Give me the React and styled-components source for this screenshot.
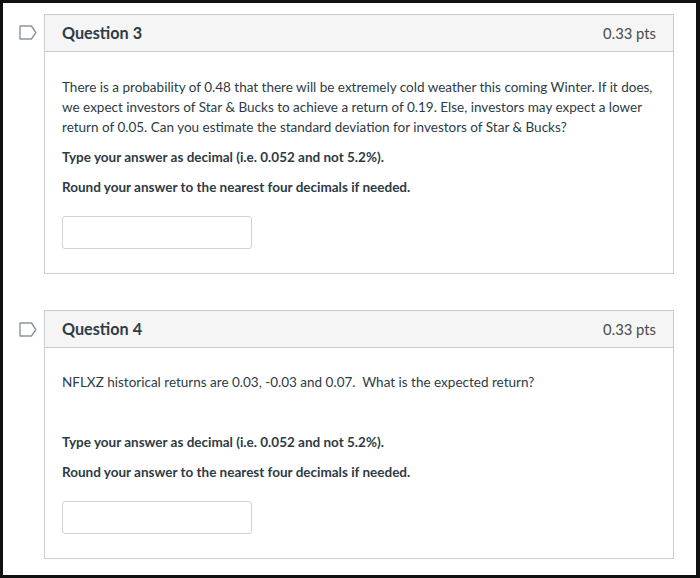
import React from "react";
import styled, { createGlobalStyle } from "styled-components";

const GlobalStyle = createGlobalStyle`
  html, body {
    margin: 0;
    padding: 0;
    background: #fff;
  }
  * {
    box-sizing: border-box;
  }
`;

const Frame = styled.div`
  width: 700px;
  height: 578px;
  border: 3px solid #111;
  border-right-width: 4px;
  background: #fff;
  padding: 11px 22px 0 16px;
  display: flex;
  flex-direction: column;
  gap: 36px;
  font-family: Lato, "Open Sans", sans-serif;
  color: #2d3b45;
  overflow: hidden;
`;

const QuestionRow = styled.div`
  display: flex;
  align-items: flex-start;
`;

const FlagCol = styled.div`
  width: 25px;
  flex: none;
  padding-top: ${(p) => p.$top || 10}px;
`;

const Card = styled.div`
  flex: 1;
  border: 1px solid #c7cdd1;
  background: #fff;
`;

const Header = styled.div`
  display: flex;
  justify-content: space-between;
  align-items: center;
  height: 37px;
  padding: 0 17px 1px;
  background: #f5f5f5;
  border-bottom: 1px solid #c7cdd1;
`;

const Title = styled.div`
  font-size: 16.2px;
  font-weight: 700;
  color: #2d3b45;
`;

const Points = styled.div`
  font-size: 14.8px;
  font-weight: 400;
  color: #4a4a4a;
`;

const Body = styled.div`
  padding: ${(p) => p.$top}px 17px 24px;
`;

const Text = styled.p`
  margin: 0 0 10px;
  font-size: 13.5px;
  line-height: 20px;
  font-weight: ${(p) => (p.$bold ? 700 : 400)};
`;

const Spacer = styled.div`
  height: ${(p) => p.$h}px;
`;

const AnswerBox = styled.input`
  display: block;
  margin-top: 19px;
  width: 190px;
  height: 33px;
  border: 1px solid #cfd3d6;
  border-radius: 3px;
  background: #fff;
  outline: none;
`;

const Flag = () => (
  <svg width="18" height="15" viewBox="0 0 18 15">
    <path
      d="M1 1 H12.5 L16.8 7.5 L12.5 14 H1 Z"
      fill="none"
      stroke="#8b969e"
      strokeWidth="1.4"
      strokeLinejoin="round"
    />
  </svg>
);

const Instructions = () => (
  <>
    <Text $bold>Type your answer as decimal (i.e. 0.052 and not 5.2%).</Text>
    <Text $bold>Round your answer to the nearest four decimals if needed.</Text>
  </>
);

const App = () => {
  return (
    <>
      <GlobalStyle />
      <Frame>
        <QuestionRow>
          <FlagCol $top={10}>
            <Flag />
          </FlagCol>
          <Card>
            <Header>
              <Title>Question 3</Title>
              <Points>0.33 pts</Points>
            </Header>
            <Body $top={25}>
              <Text>
                There is a probability of 0.48 that there will be extremely cold
                weather this coming Winter. If it does, we expect investors of
                Star &amp; Bucks to achieve a return of 0.19. Else, investors may
                expect a lower return of 0.05. Can you estimate the standard
                deviation for investors of Star &amp; Bucks?
              </Text>
              <Instructions />
              <AnswerBox type="text" />
            </Body>
          </Card>
        </QuestionRow>

        <QuestionRow>
          <FlagCol $top={11}>
            <Flag />
          </FlagCol>
          <Card>
            <Header>
              <Title>Question 4</Title>
              <Points>0.33 pts</Points>
            </Header>
            <Body $top={24}>
              <Text>
                NFLXZ historical returns are 0.03, -0.03 and 0.07.&nbsp; What is
                the expected return?
              </Text>
              <Spacer $h={30} />
              <Instructions />
              <AnswerBox type="text" />
            </Body>
          </Card>
        </QuestionRow>
      </Frame>
    </>
  );
};

export default App;
